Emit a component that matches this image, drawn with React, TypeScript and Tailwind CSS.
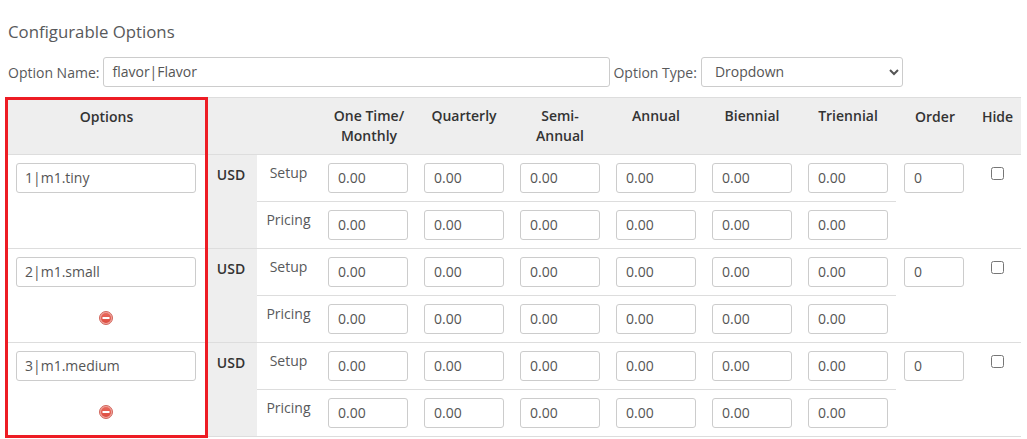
const sans = { fontFamily: '"Open Sans", sans-serif' };

const periods = ['Quarterly', 'Semi-Annual', 'Annual', 'Biennial', 'Triennial'];
const priceCols = [0, 1, 2, 3, 4, 5];

const options = [
  { value: '1|m1.tiny', removable: false },
  { value: '2|m1.small', removable: true },
  { value: '3|m1.medium', removable: true },
];

const TextBox = ({ value, className = '' }: { value: string; className?: string }) => (
  <input
    readOnly
    value={value}
    className={`block h-[30px] rounded-[3px] border border-[#ccc] bg-white pb-[2px] text-[14px] text-[#555] outline-none ${className}`}
  />
);

const RemoveIcon = ({ id }: { id: string }) => (
  <svg width="14" height="14" viewBox="0 0 14 14" className="mx-auto mt-[24px] block">
    <defs>
      <linearGradient id={id} x1="0" y1="0" x2="0" y2="1">
        <stop offset="0" stopColor="#e8695d" />
        <stop offset="1" stopColor="#dc4c40" />
      </linearGradient>
    </defs>
    <circle cx="7" cy="7" r="6.5" fill="#f0a59d" stroke="#d0665d" strokeWidth="1" />
    <circle cx="7" cy="7" r="5" fill={`url(#${id})`} />
    <rect x="3.5" y="6" width="7" height="2" fill="#fff" />
  </svg>
);

const PriceRow = ({ label, first, option, removable, index }: any) => (
  <tr className={first ? 'border-b border-[#ddd]' : ''}>
    {first && (
      <>
        <td rowSpan={2} className="border-b border-[#ddd] px-2 pt-2 align-top">
          <div className="w-[180px]">
            <TextBox value={option} className="w-full px-2" />
            {removable && <RemoveIcon id={`remove-${index}`} />}
          </div>
        </td>
        <td rowSpan={2} className="border-b border-[#ddd] bg-[#eee] pr-[2px] pt-[9px] text-center align-top font-semibold text-[#333]">
          USD
        </td>
      </>
    )}
    <td className={`h-[47px] pt-[7px] text-center align-top ${first ? '' : 'border-b border-[#ddd]'}`}>{label}</td>
    {priceCols.map((c) => (
      <td key={c} className={`px-2 pt-2 align-top ${first ? '' : 'border-b border-[#ddd]'}`}>
        <TextBox value="0.00" className="w-[80px] px-[9px]" />
      </td>
    ))}
    {first && (
      <>
        <td rowSpan={2} className="border-b border-[#ddd] px-2 pt-2 align-top">
          <TextBox value="0" className="w-[60px] px-[9px]" />
        </td>
        <td rowSpan={2} className="border-b border-[#ddd] pl-[2px] pt-3 text-center align-top">
          <input type="checkbox" className="mx-auto block h-[13px] w-[13px]" />
        </td>
      </>
    )}
  </tr>
);

export default function App() {
  return (
    <div className="relative h-[439px] w-[1027px] overflow-hidden bg-white pl-2 pt-[23px] text-[14px] text-[#58595b]" style={sans}>
      <h2 className="text-[16.8px] leading-[18px] text-[#58595b]">Configurable Options</h2>

      <div className="mt-[16px] flex h-[30px] items-center">
        <label>Option Name:</label>
        <TextBox value="flavor|Flavor" className="ml-1 w-[507px] px-2" />
        <label className="ml-[3px]">Option Type:</label>
        <select className="ml-1 -mt-[1px] h-[30px] w-[202px] rounded-[3px] border border-[#ccc] bg-white px-[9px] text-[14px] text-[#555]">
          <option>Dropdown</option>
        </select>
      </div>

      <table className="mt-[10px] w-[1013px] table-fixed border-collapse">
        <colgroup>
          <col className="w-[199px]" />
          <col className="w-[50px]" />
          <col className="w-[63px]" />
          {priceCols.map((c) => (
            <col key={c} className="w-[96px]" />
          ))}
          <col className="w-[76px]" />
          <col className="w-[49px]" />
        </colgroup>
        <thead>
          <tr className="h-[57px] border-y border-[#ddd] bg-[#eee] align-top font-semibold text-[#333]">
            <th className="pr-[2px] pt-2 font-semibold">Options</th>
            <th colSpan={2} />
            <th className="pl-[2px] pt-2 font-semibold leading-[20px]">One Time/<br />Monthly</th>
            {periods.map((p) => (
              <th key={p} className="px-3 pt-2 font-semibold leading-[20px]">{p}</th>
            ))}
            <th className="pl-[2px] pt-2 font-semibold">Order</th>
            <th className="pl-[2px] pt-2 font-semibold">Hide</th>
          </tr>
        </thead>
        <tbody>
          {options.map((o, i) => (
            <>
              <PriceRow key={`${i}-s`} first label="Setup" option={o.value} removable={o.removable} index={i} />
              <PriceRow key={`${i}-p`} label="Pricing" />
            </>
          ))}
        </tbody>
      </table>

      <div className="absolute left-[5px] top-[97px] h-[341px] w-[203px] border-[3px] border-[#ed1c24]" />
    </div>
  );
}
